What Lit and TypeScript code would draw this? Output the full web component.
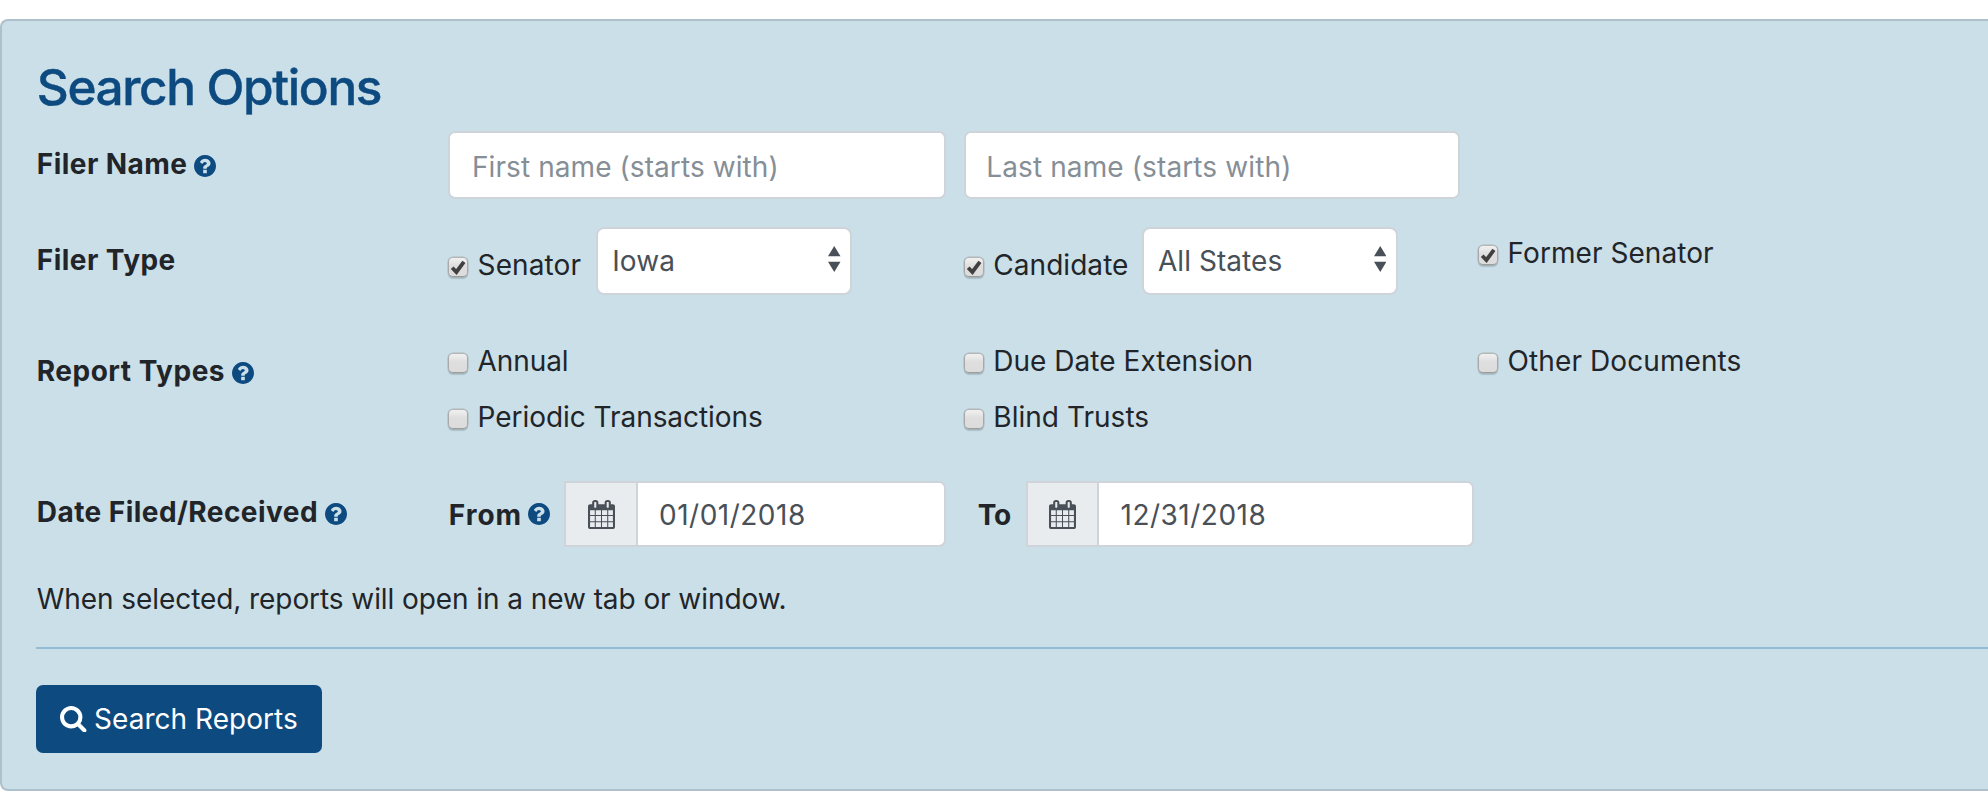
import { LitElement, html, css, svg } from "lit";
import { customElement, property } from "lit/decorators.js";
import { styleMap } from "lit/directives/style-map.js";

const help = html`<svg class="help" viewBox="128 128 1536 1536" aria-hidden="true">${svg`<path fill="currentColor" d="M1024 1376v-192q0-14-9-23t-23-9h-192q-14 0-23 9t-9 23v192q0 14 9 23t23 9h192q14 0 23-9t9-23zm256-672q0-88-55.500-163t-138.500-116-170-41q-243 0-371 213-15 24 8 42l132 100q7 6 19 6 16 0 25-12 53-68 86-92 34-24 86-24 48 0 85.500 26t37.500 59q0 38-20 61t-68 45q-63 28-115.500 86.500t-52.500 125.500v36q0 14 9 23t23 9h192q14 0 23-9t9-23q0-19 21.500-49.500t54.500-49.500q32-18 49-28.500t46-35 44.500-48 28-60.500 12.500-81zm384 192q0 209-103 385.500t-279.500 279.500-385.500 103-385.500-103-279.500-279.500-103-385.500 103-385.500 279.500-279.500 385.500-103 385.500 103 279.500 279.500 103 385.500z"/>`}</svg>`;

const calendar = html`<svg class="calendar" viewBox="64 0 1664 1792" preserveAspectRatio="none" aria-hidden="true">${svg`<path fill="currentColor" d="M192 1664h288v-288h-288v288zm352 0h320v-288h-320v288zm-352-352h288v-320h-288v320zm352 0h320v-320h-320v320zm-352-384h288v-288h-288v288zm736 736h320v-288h-320v288zm-384-736h320v-288h-320v288zm768 736h288v-288h-288v288zm-384-352h320v-320h-320v320zm-352-864v-288q0-13-9.500-22.500t-22.500-9.500h-64q-13 0-22.500 9.500t-9.500 22.500v288q0 13 9.500 22.500t22.500 9.500h64q13 0 22.500-9.500t9.500-22.500zm736 864h288v-320h-288v320zm-384-384h320v-288h-320v288zm384 0h288v-288h-288v288zm32-480v-288q0-13-9.500-22.500t-22.500-9.500h-64q-13 0-22.500 9.500t-9.500 22.500v288q0 13 9.500 22.500t22.500 9.500h64q13 0 22.500-9.500t9.500-22.500zm384-64v1280q0 52-38 90t-90 38h-1408q-52 0-90-38t-38-90v-1280q0-52 38-90t90-38h128v-96q0-66 47-113t113-47h64q66 0 113 47t47 113v96h384v-96q0-66 47-113t113-47h64q66 0 113 47t47 113v96h128q52 0 90 38t38 90z"/>`}</svg>`;

const magnifier = html`<svg class="magnifier" viewBox="64 128 1664 1664" aria-hidden="true">${svg`<path fill="currentColor" d="M1216 832q0-185-131.500-316.500t-316.500-131.500-316.500 131.500-131.500 316.500 131.500 316.500 316.500 131.500 316.500-131.500 131.500-316.500zm512 832q0 52-38 90t-90 38q-54 0-90-38l-343-342q-179 124-399 124-143 0-273.500-55.500t-225-150-150-225-55.500-273.500 55.500-273.500 150-225 225-150 273.500-55.500 273.500 55.500 225 150 150 225 55.500 273.500q0 220-124 399l343 343q37 37 37 90z"/>`}</svg>`;

/** Small bevelled checkbox followed by its caption. */
@customElement("check-option")
class CheckOption extends LitElement {
  @property() label = "";
  @property({ type: Boolean }) checked = false;
  @property({ type: Number }) tracking = 0;

  static styles = css`
    :host { display: block; }
    .option { display: flex; gap: 9.600px; height: 36px; line-height: 36px; white-space: nowrap; }
    .box {
      box-sizing: border-box; flex: none; width: 20px; height: 20px; margin-top: 10px;
      border: 1.500px solid #a9a9a9; border-color: #b5b5b5 #a9a9a9 #9c9c9c;
      border-radius: 5px; background: linear-gradient(#f1f1f1, #dedede 45%, #dcdcdc);
      box-shadow: 0 0 0 0.500px rgba(130, 130, 130, 0.4), 0 1.500px 1px rgba(60, 80, 90, 0.22);
    }
    .mark { display: block; width: 100%; height: 100%; overflow: visible; }
  `;

  render() {
    return html`<label class="option">
      <span class="box" role="checkbox" aria-checked=${this.checked}>
        ${this.checked
          ? html`<svg class="mark" viewBox="0 0 17 17"><path d="M3 9.200 7 13.200 14.100 3.700" fill="none" stroke="#404040" stroke-width="3.600" /></svg>`
          : null}
      </span>
      <span style=${styleMap({ letterSpacing: `${this.tracking}px` })}>${this.label}</span>
    </label>`;
  }
}

@customElement("state-select")
class StateSelect extends LitElement {
  @property() value = "";

  static styles = css`
    :host { display: block; flex: none; width: 255.800px; }
    .select {
      box-sizing: border-box; display: flex; align-items: center; justify-content: space-between;
      height: 68px; padding: 0 9.300px 0 14px; border: 2px solid #ced4da; border-radius: 8px;
      background: #fff; color: #495057; line-height: 36px; letter-spacing: 0.050px;
    }
    .arrows { width: 12.500px; height: 26px; margin-top: -4px; }
  `;

  render() {
    return html`<div class="select" role="combobox">
      <span>${this.value}</span>
      <svg class="arrows" viewBox="0 0 12.500 26"><path fill="#495057" d="M0 10.300 6.250 0l6.250 10.300zM0 15.700h12.500L6.250 26z" /></svg>
    </div>`;
  }
}

@customElement("app-root")
class AppRoot extends LitElement {
  static styles = css`
    :host {
      display: block; padding: 19px 0 21px; background: #fff; color: #212529;
      font: 28px/36px Inter, "Liberation Sans", sans-serif; overflow: hidden;
    }
    .panel {
      box-sizing: border-box; height: 772px; padding: 36px 0 0 34px; background: #cbdfe8;
      border: 2px solid #aec0cb; border-right: 0; border-radius: 8px 0 0 8px;
    }
    .title { margin: 0 0 14px; padding-left: 0.800px; color: #0d4a80; font-weight: 500; font-size: 49.500px; line-height: 60px; letter-spacing: -1.380px; -webkit-text-stroke: 0.400px #0d4a80; }
    .row { display: grid; grid-template-columns: 412px 515.700px 514.300px 1fr; align-items: start; }
    .names { margin-bottom: 28px; }
    .filers { margin-bottom: 48px; }
    .reports { margin-bottom: 46px; row-gap: 20px; }
    .dates { grid-template-columns: 412px 497.500px 1fr; margin-bottom: 34px; }
    .caption { display: flex; gap: 7px; padding-left: 0.800px; font-weight: 700; letter-spacing: 0.450px; white-space: nowrap; }
    .names .caption, .filers .caption { padding-top: 15px; }
    .reports .caption { padding-top: 10px; height: 26px; }
    .reports .caption span { letter-spacing: 0.500px; }
    .dates .caption { padding-top: 13px; }
    .help { flex: none; width: 22px; height: 22px; margin-top: 8.500px; color: #0d4a80; }
    input {
      box-sizing: border-box; min-width: 0; margin: 0; outline: 0; font: inherit; color: #495057;
      background: #fff; border: 2px solid #ced4da; border-radius: 7px;
    }
    input::placeholder { color: #868e96; opacity: 1; }
    .name { width: 497.500px; height: 68px; padding: 3px 20px 0 22px; letter-spacing: 0.080px; }
    .name.last { width: 496.200px; padding-left: 20.500px; letter-spacing: 0.120px; }
    .pair { display: flex; }
    .pair check-option { padding-top: 19.500px; width: 148.300px; flex: none; }
    .pair.wide check-option { width: 178.300px; }
    .single { padding-top: 7.500px; }
    .field { display: flex; align-items: flex-start; }
    .field.to { padding-left: 31.500px; }
    .lead { display: flex; flex: none; box-sizing: border-box; gap: 6px; width: 116px; padding: 15.500px 0 0 0.800px; font-weight: 700; letter-spacing: 1px; }
    .lead .help { margin-top: 6.500px; }
    .to .lead { width: 49px; letter-spacing: -0.300px; }
    .group { display: flex; flex: none; width: 382px; height: 66px; }
    .to .group { width: 448.200px; }
    .addon {
      box-sizing: border-box; flex: none; display: flex; align-items: center; justify-content: center;
      width: 72px; padding-top: 1px; background: #e9ecef; border: 2px solid #ced4da; border-right: 0; color: #495057;
    }
    .to .addon { width: 70.500px; }
    .calendar { width: 27px; height: 29px; }
    .group input { flex: 1; height: 66px; padding: 2px 20px 0 21px; border-radius: 0 7px 7px 0; letter-spacing: 0.500px; }
    .to .group input { padding-left: 22px; }
    .note { margin: 0 0 30px; padding-left: 0.800px; letter-spacing: -0.075px; }
    .rule { height: 2px; margin: 0 0 36px; border: 0; background: #93bdd4; }
    .submit {
      display: flex; align-items: center; gap: 7.500px; width: 286px; height: 68px; margin: 0; padding: 0 0 0 24px;
      border: 0; border-radius: 7px; background: #0d4a80; color: #fff; font: inherit; letter-spacing: 0.040px; white-space: nowrap;
    }
    .magnifier { flex: none; width: 26.500px; height: 26.500px; }
  `;

  render() {
    return html`<section class="panel">
      <h1 class="title">Search Options</h1>

      <div class="row names">
        <div class="caption"><span>Filer Name</span>${help}</div>
        <input class="name" placeholder="First name (starts with)" />
        <input class="name last" placeholder="Last name (starts with)" />
      </div>

      <div class="row filers">
        <div class="caption"><span>Filer Type</span></div>
        <div class="pair">
          <check-option label="Senator" tracking="0.100" checked></check-option>
          <state-select value="Iowa"></state-select>
        </div>
        <div class="pair wide">
          <check-option label="Candidate" tracking="0.050" checked></check-option>
          <state-select value="All States"></state-select>
        </div>
        <check-option class="single" label="Former Senator" tracking="0.060" checked></check-option>
      </div>

      <div class="row reports">
        <div class="caption"><span>Report Types</span>${help}</div>
        <check-option label="Annual" tracking="-0.100"></check-option>
        <check-option label="Due Date Extension" tracking="0.030"></check-option>
        <check-option label="Other Documents" tracking="0.090"></check-option>
        <span></span>
        <check-option label="Periodic Transactions" tracking="-0.050"></check-option>
        <check-option label="Blind Trusts" tracking="0.030"></check-option>
      </div>

      <div class="row dates">
        <div class="caption"><span>Date Filed/Received</span>${help}</div>
        <div class="field">
          <div class="lead"><span>From</span>${help}</div>
          <div class="group"><span class="addon">${calendar}</span><input value="01/01/2018" /></div>
        </div>
        <div class="field to">
          <div class="lead"><span>To</span></div>
          <div class="group"><span class="addon">${calendar}</span><input value="12/31/2018" /></div>
        </div>
      </div>

      <p class="note">When selected, reports will open in a new tab or window.</p>
      <hr class="rule" />
      <button class="submit">${magnifier}<span>Search Reports</span></button>
    </section>`;
  }
}
